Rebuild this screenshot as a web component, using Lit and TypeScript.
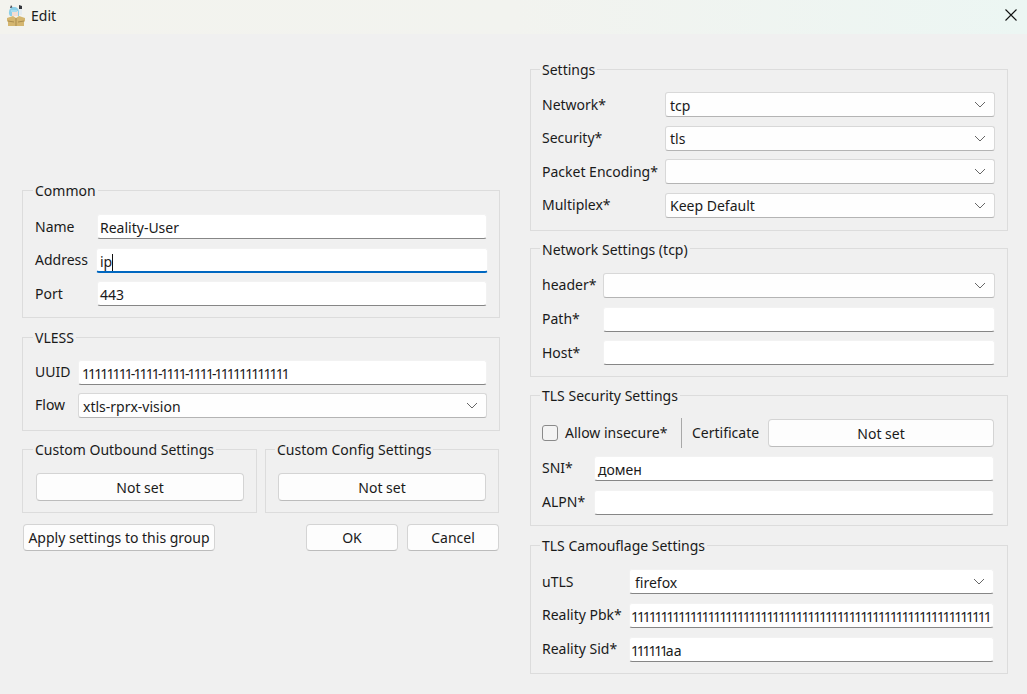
import {css, html, LitElement, svg} from "lit";
import {customElement} from "lit/decorators.js";

const chevron = svg`<svg class="chev" width="12" height="7" viewBox="0 0 12 7"><path d="M1 1l5 5 5-5" fill="none" stroke="#666" stroke-width="1"/></svg>`;

const edit = (value: unknown = "", cls = "") => html`<div class="edit ${cls}">${value}</div>`;
const combo = (value = "", cls = "") => html`<div class="combo ${cls}"><span>${value}</span>${chevron}</div>`;
const label = (text: string) => html`<div class="label">${text}</div>`;

@customElement("app-root")
export class AppRoot extends LitElement {
  protected render(): unknown {
    return html`
      <header class="titlebar">
        <svg class="logo" width="18" height="21" viewBox="0 0 18 21">
          <path d="M4 0l2 3H3z" fill="#4a4f58"/>
          <path d="M12 0l3 1v4h-3z" fill="#33363c"/>
          <path d="M2 9c-.5-5 2-7 5-7s5 2 5 5v4H3z" fill="#8ccfe8"/>
          <path d="M5 6h6v5H5z" fill="#f3ddd2"/>
          <path d="M4 5h6v2H4z" fill="#a6dcef"/>
          <path d="M12 4h3v6h-3z" fill="#e6ecf0"/>
          <path d="M0 13l6-2 3 2 3-2 6 2v3l-1 1v4H1v-4l-1-1z" fill="#d4b670"/>
          <path d="M9 13v8M1 16l6 1M17 16l-6 1" stroke="#a98c4e" stroke-width="1" fill="none"/>
        </svg>
        <span class="title">Edit</span>
        <svg class="close" width="12" height="12" viewBox="0 0 12 12"><path d="M.5.5l11 11M11.5.5l-11 11" stroke="#111" stroke-width="1.1" fill="none"/></svg>
      </header>
      <main class="main">
        <section class="col left">
          <fieldset class="common">
            <legend>Common</legend>
            <div class="form">
              ${label("Name")}${edit("Reality-User")}
              ${label("Address")}<div class="edit focus">ip<i class="caret"></i></div>
              ${label("Port")}${edit("443")}
            </div>
          </fieldset>
          <fieldset class="vless">
            <legend>VLESS</legend>
            <div class="form">
              ${label("UUID")}${edit("11111111-1111-1111-1111-111111111111", "uuid")}
              ${label("Flow")}${combo("xtls-rprx-vision")}
            </div>
          </fieldset>
          <div class="pair">
            <fieldset class="custom"><legend>Custom Outbound Settings</legend><button>Not set</button></fieldset>
            <fieldset class="custom"><legend>Custom Config Settings</legend><button>Not set</button></fieldset>
          </div>
          <div class="actions">
            <button class="apply">Apply settings to this group</button>
            <span class="spring"></span>
            <button class="dlg">OK</button>
            <button class="dlg">Cancel</button>
          </div>
        </section>
        <section class="col right">
          <fieldset class="settings">
            <legend>Settings</legend>
            <div class="form">
              ${label("Network*")}${combo("tcp")}
              ${label("Security*")}${combo("tls")}
              ${label("Packet Encoding*")}${combo("")}
              ${label("Multiplex*")}${combo("Keep Default")}
            </div>
          </fieldset>
          <fieldset class="network">
            <legend>Network Settings (tcp)</legend>
            <div class="form">
              ${label("header*")}${combo("")}
              ${label("Path*")}${edit()}
              ${label("Host*")}${edit()}
            </div>
          </fieldset>
          <fieldset class="tls">
            <legend>TLS Security Settings</legend>
            <div class="cert-row">
              <span class="check"></span>
              <span class="allow">Allow insecure*</span>
              <span class="divider"></span>
              <span class="cert">Certificate</span>
              <button>Not set</button>
            </div>
            <div class="form">
              ${label("SNI*")}${edit("домен")}
              ${label("ALPN*")}${edit()}
            </div>
          </fieldset>
          <fieldset class="camo">
            <legend>TLS Camouflage Settings</legend>
            <div class="form">
              ${label("uTLS")}${combo("firefox", "flat")}
              ${label("Reality Pbk*")}${edit("1".repeat(61), "pbk")}
              ${label("Reality Sid*")}${edit(html`<span class="ones">111111</span>aa`, "sid")}
            </div>
          </fieldset>
        </section>
      </main>
    `;
  }

  static styles = css`
    :host {
      display: block;
      width: 1027px;
      height: 694px;
      overflow: hidden;
      background: #f0f0f0;
      color: #1a1a1a;
      font: 14px/20px "Noto Sans", "Open Sans", sans-serif;
    }

    .titlebar {
      height: 34px;
      display: flex;
      align-items: center;
      padding: 0 10px 0 7px;
      box-sizing: border-box;
      background: linear-gradient(90deg, #f3f3ee 0%, #f2f3ef 50%, #ecf6f3 100%);
    }
    .logo { margin: -4px 6px 0 0; }
    .title { flex: 1; margin-top: -2px; }
    .close { margin-top: -4px; }

    .main {
      display: grid;
      grid-template-columns: 478px 478px;
      gap: 30px;
      padding: 25px 0 0 22px;
    }
    .col { display: flex; flex-direction: column; min-width: 0; }
    .left { padding-top: 121px; gap: 9px; }
    .right { gap: 8px; }

    fieldset {
      margin: 0;
      min-width: 0;
      border: 1px solid #dcdcdc;
      padding: 13px 12px 12px 12px;
    }
    legend {
      box-sizing: border-box;
      height: 20px;
      margin-left: -2px;
      padding: 1px 2px 0;
      line-height: 20px;
    }
    .custom legend { margin-left: -3px; }
    .right fieldset { padding-left: 11px; padding-right: 12px; }

    .form { display: grid; align-items: center; row-gap: 8.67px; }
    .common .form { grid-template-columns: 62px 1fr; }
    .vless .form { grid-template-columns: 43px 1fr; row-gap: 8px; }
    .settings .form { grid-template-columns: 123px 1fr; }
    .network .form { grid-template-columns: 61px 1fr; }
    .tls .form { grid-template-columns: 52px 1fr; row-gap: 9px; }
    .camo .form { grid-template-columns: 87px 1fr; }

    .common { padding-top: 14px; padding-bottom: 11px; }
    .right .network { padding-top: 14px; padding-bottom: 11px; }
    .right .tls { padding-right: 13px; padding-bottom: 10px; }
    .right .camo { padding: 14px 13px 11px 11px; margin-top: 1px; }

    .label { white-space: nowrap; }
    .vless .label, .tls .label { margin-top: -2px; }

    .edit, .combo {
      height: 25px;
      box-sizing: border-box;
      background: #fff;
      border-radius: 3px;
      white-space: nowrap;
      overflow: hidden;
      line-height: 26px;
    }
    .edit {
      padding-left: 3px;
      border: 1px solid #f2f2f2;
      border-bottom-color: #868686;
    }
    .common .edit { padding-left: 2px; }
    .common .edit.focus {
      margin: 0 -1px;
      padding-left: 3px;
      border-bottom: 2px solid #0067c0;
    }
    .caret {
      display: inline-block;
      width: 1px;
      height: 17px;
      background: #111;
      vertical-align: -4px;
    }
    .uuid { letter-spacing: -1.9px; }
    .pbk { letter-spacing: -2.13px; padding-left: 1px; }
    .sid { padding-left: 1px; }
    .ones { letter-spacing: -2.2px; }

    .combo {
      display: flex;
      align-items: center;
      justify-content: space-between;
      padding: 0 8px 0 4px;
      border: 1px solid #d8d8d8;
      border-bottom-color: #b4b4b4;
      background: #fefefe;
    }
    .combo span { padding-top: 2px; }
    .combo.flat {
      border-color: #f2f2f2;
      border-bottom-color: #868686;
      background: #fff;
      padding-left: 5px;
    }
    .chev { flex: none; }

    button {
      font: inherit;
      color: inherit;
      box-sizing: border-box;
      height: 28px;
      width: 100%;
      padding: 1px 0 0;
      background: #fdfdfd;
      border: 1px solid #d4d4d4;
      border-bottom-color: #bcbcbc;
      border-radius: 4px;
    }

    .pair { display: grid; grid-template-columns: 235px 234px; gap: 8px; margin-top: -1px; }
    .custom { padding: 14px 12px 11px 13px; }
    .custom + .custom { padding-left: 12px; }

    .actions { display: flex; gap: 9px; padding: 2px 1px 0 1px; }
    .actions button { height: 27px; padding-top: 0; }
    .apply { width: 192px; flex: none; }
    .spring { flex: 1; }
    .dlg { width: 92px; flex: none; }

    .cert-row { display: flex; align-items: center; height: 30px; margin-bottom: 8px; }
    .check {
      width: 16px;
      height: 16px;
      box-sizing: border-box;
      border: 1px solid #8a8a8a;
      border-radius: 3px;
      background: #f4f4f4;
      margin-right: 7px;
    }
    .allow { width: 116px; white-space: nowrap; }
    .divider { width: 1px; height: 30px; background: #a8a8a8; margin-right: 10px; }
    .cert { flex: none; width: 76px; white-space: nowrap; }
    .cert-row button { flex: 1; width: auto; }
  `;
}
